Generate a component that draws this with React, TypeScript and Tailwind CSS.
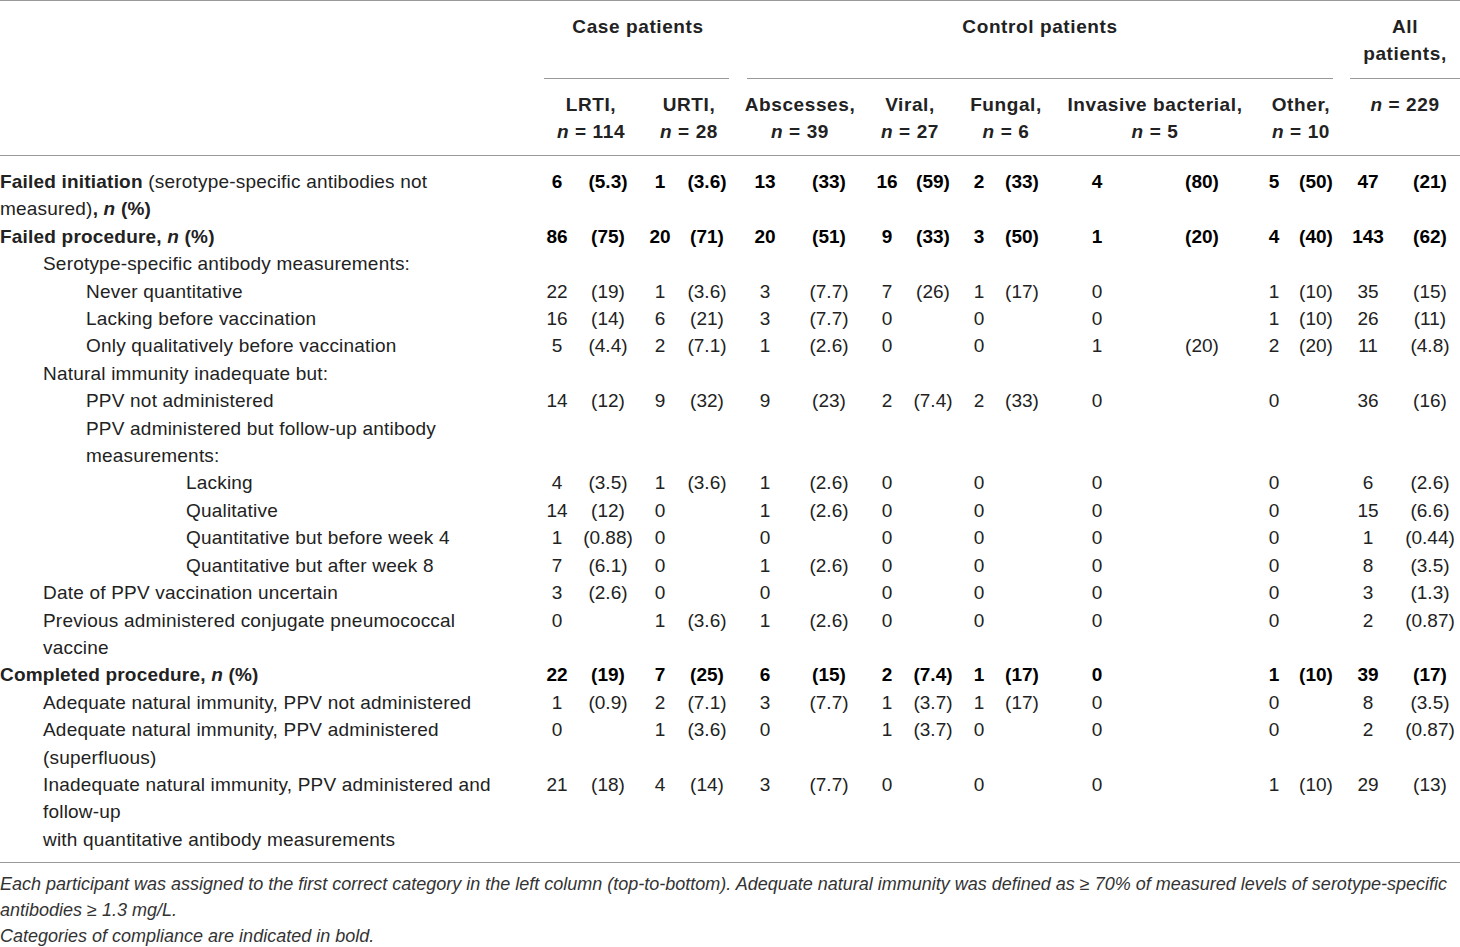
import React from 'react';

type Row = {
  label: React.ReactNode;
  indent: 0 | 1 | 2 | 3;
  bold?: boolean;
  vals?: string[];
};

const cols =
  'grid grid-cols-[540px_34px_68px_36px_58px_58px_70px_46px_46px_46px_40px_110px_100px_44px_40px_64px_60px]';

const indentClass = ['pl-0', 'pl-[43px]', 'pl-[86px]', 'pl-[186px]'];

const N = () => <span className="italic">n</span>;

const rows: Row[] = [
  {
    label: (
      <>
        <b>Failed initiation</b> (serotype-specific antibodies not
        <br />
        measured)<b>, <N /> (%)</b>
      </>
    ),
    indent: 0,
    bold: true,
    vals: ['6', '(5.3)', '1', '(3.6)', '13', '(33)', '16', '(59)', '2', '(33)', '4', '(80)', '5', '(50)', '47', '(21)'],
  },
  {
    label: (
      <b>
        Failed procedure, <N /> (%)
      </b>
    ),
    indent: 0,
    bold: true,
    vals: ['86', '(75)', '20', '(71)', '20', '(51)', '9', '(33)', '3', '(50)', '1', '(20)', '4', '(40)', '143', '(62)'],
  },
  { label: 'Serotype-specific antibody measurements:', indent: 1 },
  {
    label: 'Never quantitative',
    indent: 2,
    vals: ['22', '(19)', '1', '(3.6)', '3', '(7.7)', '7', '(26)', '1', '(17)', '0', '', '1', '(10)', '35', '(15)'],
  },
  {
    label: 'Lacking before vaccination',
    indent: 2,
    vals: ['16', '(14)', '6', '(21)', '3', '(7.7)', '0', '', '0', '', '0', '', '1', '(10)', '26', '(11)'],
  },
  {
    label: 'Only qualitatively before vaccination',
    indent: 2,
    vals: ['5', '(4.4)', '2', '(7.1)', '1', '(2.6)', '0', '', '0', '', '1', '(20)', '2', '(20)', '11', '(4.8)'],
  },
  { label: 'Natural immunity inadequate but:', indent: 1 },
  {
    label: 'PPV not administered',
    indent: 2,
    vals: ['14', '(12)', '9', '(32)', '9', '(23)', '2', '(7.4)', '2', '(33)', '0', '', '0', '', '36', '(16)'],
  },
  {
    label: (
      <>
        PPV administered but follow-up antibody
        <br />
        measurements:
      </>
    ),
    indent: 2,
  },
  {
    label: 'Lacking',
    indent: 3,
    vals: ['4', '(3.5)', '1', '(3.6)', '1', '(2.6)', '0', '', '0', '', '0', '', '0', '', '6', '(2.6)'],
  },
  {
    label: 'Qualitative',
    indent: 3,
    vals: ['14', '(12)', '0', '', '1', '(2.6)', '0', '', '0', '', '0', '', '0', '', '15', '(6.6)'],
  },
  {
    label: 'Quantitative but before week 4',
    indent: 3,
    vals: ['1', '(0.88)', '0', '', '0', '', '0', '', '0', '', '0', '', '0', '', '1', '(0.44)'],
  },
  {
    label: 'Quantitative but after week 8',
    indent: 3,
    vals: ['7', '(6.1)', '0', '', '1', '(2.6)', '0', '', '0', '', '0', '', '0', '', '8', '(3.5)'],
  },
  {
    label: 'Date of PPV vaccination uncertain',
    indent: 1,
    vals: ['3', '(2.6)', '0', '', '0', '', '0', '', '0', '', '0', '', '0', '', '3', '(1.3)'],
  },
  {
    label: (
      <>
        Previous administered conjugate pneumococcal
        <br />
        vaccine
      </>
    ),
    indent: 1,
    vals: ['0', '', '1', '(3.6)', '1', '(2.6)', '0', '', '0', '', '0', '', '0', '', '2', '(0.87)'],
  },
  {
    label: (
      <b>
        Completed procedure, <N /> (%)
      </b>
    ),
    indent: 0,
    bold: true,
    vals: ['22', '(19)', '7', '(25)', '6', '(15)', '2', '(7.4)', '1', '(17)', '0', '', '1', '(10)', '39', '(17)'],
  },
  {
    label: 'Adequate natural immunity, PPV not administered',
    indent: 1,
    vals: ['1', '(0.9)', '2', '(7.1)', '3', '(7.7)', '1', '(3.7)', '1', '(17)', '0', '', '0', '', '8', '(3.5)'],
  },
  {
    label: (
      <>
        Adequate natural immunity, PPV administered
        <br />
        (superfluous)
      </>
    ),
    indent: 1,
    vals: ['0', '', '1', '(3.6)', '0', '', '1', '(3.7)', '0', '', '0', '', '0', '', '2', '(0.87)'],
  },
  {
    label: (
      <>
        Inadequate natural immunity, PPV administered and
        <br />
        follow-up
        <br />
        with quantitative antibody measurements
      </>
    ),
    indent: 1,
    vals: ['21', '(18)', '4', '(14)', '3', '(7.7)', '0', '', '0', '', '0', '', '1', '(10)', '29', '(13)'],
  },
];

function HeadCell({ top, bottom, className }: { top: React.ReactNode; bottom: React.ReactNode; className: string }) {
  return (
    <div className={`flex flex-col items-center pt-[12px] font-bold tracking-[0.6px] ${className}`}>
      <span className="whitespace-nowrap">{top}</span>
      <span className="whitespace-nowrap">{bottom}</span>
    </div>
  );
}

export default function App() {
  return (
    <div
      className="w-[1460px] bg-white text-[19px] leading-[27.4px] text-[#222]"
      style={{ fontFamily: '"Liberation Sans", Arial, sans-serif' }}
    >
      <div className="border-t border-[#999]">
        {/* group header */}
        <div className={`${cols} h-[78px]`}>
          <div />
          <div className="col-span-4 flex flex-col">
            <div className="flex-1 pt-[12px] text-center font-bold tracking-[0.6px]">Case patients</div>
            <div className="ml-[4px] mr-[7px] border-b border-[#999]" />
          </div>
          <div className="col-span-10 flex flex-col">
            <div className="ml-[11px] mr-[3px] flex-1 pt-[12px] text-center font-bold tracking-[0.6px]">
              Control patients
            </div>
            <div className="ml-[11px] mr-[3px] border-b border-[#999]" />
          </div>
          <div className="col-span-2 flex flex-col">
            <div className="ml-[14px] flex-1 pt-[12px] text-center font-bold tracking-[0.6px]">
              All
              <br />
              patients,
            </div>
            <div className="ml-[14px] border-b border-[#999]" />
          </div>
        </div>

        {/* sub header */}
        <div className={`${cols} h-[77px] border-b border-[#999]`}>
          <div />
          <HeadCell className="col-span-2" top="LRTI," bottom={<><N /> = 114</>} />
          <HeadCell className="col-span-2" top="URTI," bottom={<><N /> = 28</>} />
          <HeadCell className="col-span-2" top="Abscesses," bottom={<><N /> = 39</>} />
          <HeadCell className="col-span-2" top="Viral," bottom={<><N /> = 27</>} />
          <HeadCell className="col-span-2 pl-[14px]" top="Fungal," bottom={<><N /> = 6</>} />
          <HeadCell className="col-span-2 pl-[16px]" top="Invasive bacterial," bottom={<><N /> = 5</>} />
          <HeadCell className="col-span-2 pl-[14px]" top="Other," bottom={<><N /> = 10</>} />
          <div className="col-span-2 ml-[14px] pt-[12px] text-center font-bold tracking-[0.6px] whitespace-nowrap">
            <N /> = 229
          </div>
        </div>

        {/* body */}
        <div className="border-b border-[#999] pt-[12px] pb-[9px]">
          {rows.map((row, i) => (
            <div key={i} className={cols}>
              <div className={`whitespace-nowrap tracking-[0.2px] ${indentClass[row.indent]}`}>{row.label}</div>
              {Array.from({ length: 16 }).map((_, j) => (
                <div
                  key={j}
                  className={`flex justify-center whitespace-nowrap ${row.bold ? 'font-bold text-black' : ''}`}
                >
                  {row.vals ? row.vals[j] : ''}
                </div>
              ))}
            </div>
          ))}
        </div>
      </div>

      {/* footnotes */}
      <div className="pt-[8px] text-[18px] italic leading-[26px] text-[#333]">
        <p className="whitespace-nowrap">
          Each participant was assigned to the first correct category in the left column (top-to-bottom). Adequate
          natural immunity was defined as ≥ 70% of measured levels of serotype-specific
        </p>
        <p>antibodies ≥ 1.3 mg/L.</p>
        <p>Categories of compliance are indicated in bold.</p>
      </div>
    </div>
  );
}
